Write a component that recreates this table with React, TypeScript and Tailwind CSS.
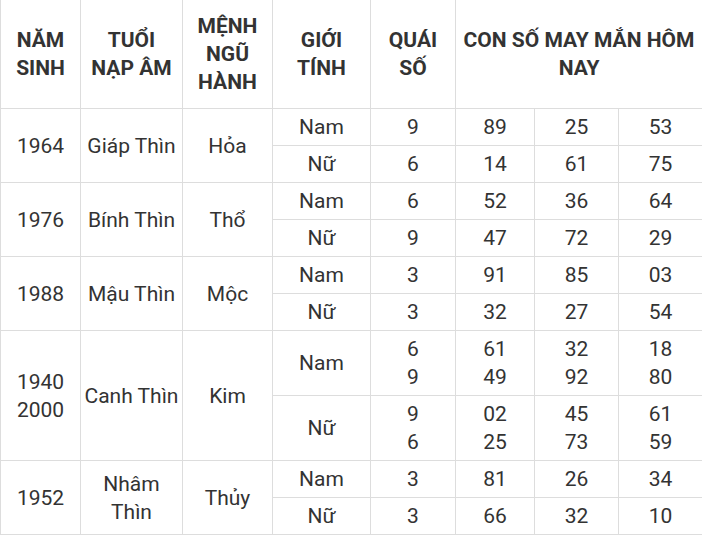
const rows = [
  { year: ['1964'], tuoi: 'Giáp Thìn', menh: 'Hỏa', nam: { q: ['9'], n: [['89', '25', '53']] }, nu: { q: ['6'], n: [['14', '61', '75']] } },
  { year: ['1976'], tuoi: 'Bính Thìn', menh: 'Thổ', nam: { q: ['6'], n: [['52', '36', '64']] }, nu: { q: ['9'], n: [['47', '72', '29']] } },
  { year: ['1988'], tuoi: 'Mậu Thìn', menh: 'Mộc', nam: { q: ['3'], n: [['91', '85', '03']] }, nu: { q: ['3'], n: [['32', '27', '54']] } },
  {
    year: ['1940', '2000'], tuoi: 'Canh Thìn', menh: 'Kim',
    nam: { q: ['6', '9'], n: [['61', '32', '18'], ['49', '92', '80']] },
    nu: { q: ['9', '6'], n: [['02', '45', '61'], ['25', '73', '59']] },
  },
  { year: ['1952'], tuoi: 'Nhâm Thìn', menh: 'Thủy', nam: { q: ['3'], n: [['81', '26', '34']] }, nu: { q: ['3'], n: [['66', '32', '10']] } },
];

const td = 'border border-[#dddddd] px-0.5 py-1 text-center align-middle';
const th = 'border border-[#dddddd] px-[5px] py-3 text-center align-middle font-bold uppercase';

function Lines({ items }: { items: string[] }) {
  return (
    <>
      {items.map((t, i) => (
        <div key={i}>{t}</div>
      ))}
    </>
  );
}

export default function App() {
  return (
    <div className="w-[702px] h-[536px] overflow-hidden bg-white">
      <table
        className="-mt-px w-[702px] table-fixed border-collapse text-[21px] leading-[28px] text-[#333333]"
        style={{ fontFamily: 'Roboto, "Liberation Sans", sans-serif' }}
      >
        <colgroup>
          <col className="w-[80px]" />
          <col className="w-[102px]" />
          <col className="w-[90px]" />
          <col className="w-[98px]" />
          <col className="w-[85px]" />
          <col className="w-[79px]" />
          <col className="w-[84px]" />
          <col className="w-[84px]" />
        </colgroup>
        <thead>
          <tr>
            <th className={th}>Năm sinh</th>
            <th className={th}>Tuổi nạp âm</th>
            <th className={th}>Mệnh ngũ hành</th>
            <th className={th}>Giới tính</th>
            <th className={th}>Quái số</th>
            <th className={th} colSpan={3}>Con số may mắn hôm nay</th>
          </tr>
        </thead>
        <tbody>
          {rows.map((r) => [
            <tr key={r.year[0] + 'a'}>
              <td className={td} rowSpan={2}><Lines items={r.year} /></td>
              <td className={td} rowSpan={2}>{r.tuoi}</td>
              <td className={td} rowSpan={2}>{r.menh}</td>
              <td className={td}>Nam</td>
              <td className={td}><Lines items={r.nam.q} /></td>
              {[0, 1, 2].map((c) => (
                <td key={c} className={td}><Lines items={r.nam.n.map((l) => l[c])} /></td>
              ))}
            </tr>,
            <tr key={r.year[0] + 'b'}>
              <td className={td}>Nữ</td>
              <td className={td}><Lines items={r.nu.q} /></td>
              {[0, 1, 2].map((c) => (
                <td key={c} className={td}><Lines items={r.nu.n.map((l) => l[c])} /></td>
              ))}
            </tr>,
          ])}
        </tbody>
      </table>
    </div>
  );
}
